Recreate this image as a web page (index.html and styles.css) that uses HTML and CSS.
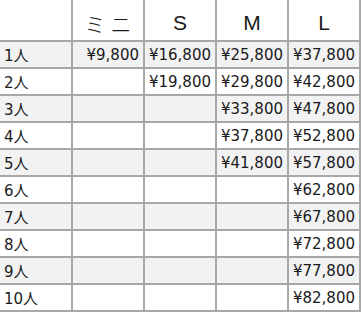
FILE: index.html
```html
<!DOCTYPE html>
<html lang="ja">
<head>
    <meta charset="UTF-8">
    <title>料金表</title>
    <link rel="stylesheet" href="styles.css">
</head>
<body>
    <div class="price-table">
        <div class="cell head"></div>
        <div class="cell head kana">ミニ</div>
        <div class="cell head">S</div>
        <div class="cell head">M</div>
        <div class="cell head">L</div>

        <div class="cell label odd">1人</div>
        <div class="cell price odd">¥9,800</div>
        <div class="cell price odd">¥16,800</div>
        <div class="cell price odd">¥25,800</div>
        <div class="cell price odd">¥37,800</div>

        <div class="cell label">2人</div>
        <div class="cell price"></div>
        <div class="cell price">¥19,800</div>
        <div class="cell price">¥29,800</div>
        <div class="cell price">¥42,800</div>

        <div class="cell label odd">3人</div>
        <div class="cell price odd"></div>
        <div class="cell price odd"></div>
        <div class="cell price odd">¥33,800</div>
        <div class="cell price odd">¥47,800</div>

        <div class="cell label">4人</div>
        <div class="cell price"></div>
        <div class="cell price"></div>
        <div class="cell price">¥37,800</div>
        <div class="cell price">¥52,800</div>

        <div class="cell label odd">5人</div>
        <div class="cell price odd"></div>
        <div class="cell price odd"></div>
        <div class="cell price odd">¥41,800</div>
        <div class="cell price odd">¥57,800</div>

        <div class="cell label">6人</div>
        <div class="cell price"></div>
        <div class="cell price"></div>
        <div class="cell price"></div>
        <div class="cell price">¥62,800</div>

        <div class="cell label odd">7人</div>
        <div class="cell price odd"></div>
        <div class="cell price odd"></div>
        <div class="cell price odd"></div>
        <div class="cell price odd">¥67,800</div>

        <div class="cell label">8人</div>
        <div class="cell price"></div>
        <div class="cell price"></div>
        <div class="cell price"></div>
        <div class="cell price">¥72,800</div>

        <div class="cell label odd">9人</div>
        <div class="cell price odd"></div>
        <div class="cell price odd"></div>
        <div class="cell price odd"></div>
        <div class="cell price odd">¥77,800</div>

        <div class="cell label">10人</div>
        <div class="cell price"></div>
        <div class="cell price"></div>
        <div class="cell price"></div>
        <div class="cell price">¥82,800</div>
    </div>
</body>
</html>
```

FILE: styles.css
```css
/* Page */
body {
    margin: 0;
    background-color: #ffffff;
    font-family: "DejaVu Sans", "Noto Sans CJK JP", sans-serif;
    color: #1a1a1a;
}

/* Table grid: gaps show the grey lines */
.price-table {
    display: grid;
    grid-template-columns: 71px repeat(4, 70px);
    grid-template-rows: 40px repeat(10, 25px);
    gap: 2px;
    width: 359px;
    padding: 0 2px 2px 0;
    background-color: #a8a8a8;
}

.cell {
    display: flex;
    align-items: center;
    background-color: #ffffff;
    font-size: 15px;
    white-space: nowrap;
}
.cell.odd {
    background-color: #f2f2f2;
}

/* Header */
.head {
    justify-content: center;
    padding-top: 5px;
    font-family: "Liberation Sans", "Noto Sans CJK JP", sans-serif;
    font-size: 21px;
}
.head.kana {
    font-family: "Noto Sans CJK JP", sans-serif;
    font-weight: 300;
    font-size: 21px;
    letter-spacing: 5px;
    padding-left: 5px;
}

/* Body cells */
.label {
    padding-left: 4px;
}
.price {
    justify-content: flex-end;
    padding-right: 4px;
}
```
